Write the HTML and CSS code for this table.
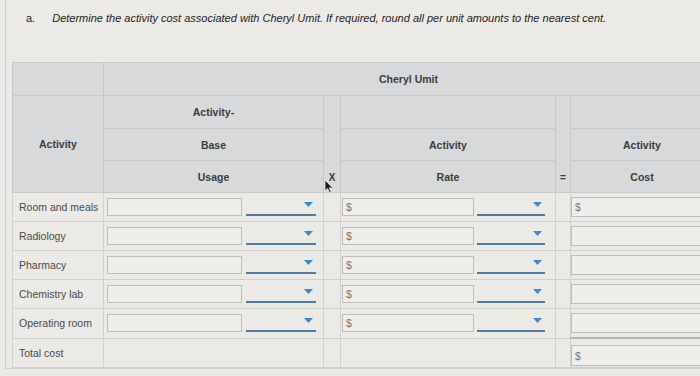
FILE: index.html
```html
<!DOCTYPE html>
<html lang="en">
<head>
  <meta charset="UTF-8">
  <meta name="viewport" content="width=device-width, initial-scale=1.0">
  <title>Activity cost</title>
  <link rel="stylesheet" href="styles.css">
</head>
<body>
  <div class="page">
    <p class="prompt"><span class="label">a.</span><em>Determine the activity cost associated with Cheryl Umit. If required, round all per unit amounts to the nearest cent.</em></p>

    <table class="grid">
      <colgroup>
        <col class="c-name">
        <col class="c-base">
        <col class="c-op">
        <col class="c-rate">
        <col class="c-eq">
        <col class="c-cost">
      </colgroup>
      <thead>
        <tr class="h1">
          <th></th>
          <th colspan="5">Cheryl Umit</th>
        </tr>
        <tr class="h2">
          <th rowspan="3">Activity</th>
          <th>Activity-</th>
          <th rowspan="3" class="op">X</th>
          <th></th>
          <th rowspan="3" class="op">=</th>
          <th></th>
        </tr>
        <tr class="h3">
          <th>Base</th>
          <th>Activity</th>
          <th>Activity</th>
        </tr>
        <tr class="h4">
          <th>Usage</th>
          <th>Rate</th>
          <th>Cost</th>
        </tr>
      </thead>
      <tbody id="rows"></tbody>
    </table>
  </div>

  <!-- mouse pointer left over the header -->
  <svg class="cursor" width="10" height="15" viewBox="0 0 10 15">
    <path d="M1 1 L1 12 L3.6 9.6 L5.6 14 L7.2 13.3 L5.3 9 L8.8 9 Z" fill="#1c1c1c" stroke="#f2f2f2" stroke-width="0.8"/>
  </svg>

  <script>
    const activities = ['Room and meals', 'Radiology', 'Pharmacy', 'Chemistry lab', 'Operating room'];

    const arrow = '<svg width="9" height="5" viewBox="0 0 9 5"><path d="M0 0 H9 L4.5 5 Z" fill="#3b88cc"/></svg>';
    const dropdown = `<div class="select">${arrow}</div>`;

    const body = document.getElementById('rows');

    activities.forEach((name, i) => {
      const tr = document.createElement('tr');
      tr.innerHTML = `
        <td class="name">${name}</td>
        <td><div class="pair"><div class="field base"></div>${dropdown}</div></td>
        <td></td>
        <td><div class="pair rate"><div class="field money"><span>$</span></div>${dropdown}</div></td>
        <td></td>
        <td class="cost"><div class="field">${i === 0 ? '<span>$</span>' : ''}</div></td>`;
      body.appendChild(tr);
    });

    const total = document.createElement('tr');
    total.className = 'total';
    total.innerHTML = `
      <td class="name">Total cost</td>
      <td></td><td></td><td></td><td></td>
      <td class="cost"><div class="field"><span>$</span></div></td>`;
    body.appendChild(total);
  </script>
</body>
</html>
```

FILE: styles.css
```css
body {
  margin: 0;
  background-color: #ebeae7;
  font-family: "Liberation Sans", Arial, sans-serif;
  color: #444;
  overflow: hidden;
}
.page {
  margin-left: 5px;
  height: 369px;
  box-sizing: border-box;
  padding: 11px 0 0 6px;
  border-left: 1px solid #d2d0cc;
  border-bottom: 1px solid #d2d0cc;
}
.prompt {
  margin: 0 0 0 14px;
  font-size: 11px;
  line-height: 14px;
  color: #222;
  white-space: nowrap;
}
.prompt .label {
  margin-right: 17px;
}
.grid {
  margin-top: 37px;
  width: 701px;
  table-layout: fixed;
  border-collapse: collapse;
  font-size: 10.5px;
}
.c-name { width: 91px; }
.c-base { width: 220px; }
.c-op { width: 17px; }
.c-rate { width: 215px; }
.c-eq { width: 15px; }
.c-cost { width: 143px; }

.grid th,
.grid td {
  border: 1px solid #c6c8c9;
  padding: 0;
}
.grid th {
  background-color: #d7d9da;
  color: #3c3c3c;
  font-weight: bold;
  text-align: center;
}
.h1 { height: 33px; }
.h2 { height: 33px; }
.h3 { height: 32px; }
.h4 { height: 32px; }
.grid th.op {
  vertical-align: bottom;
  padding-bottom: 9px;
  font-size: 10px;
}
.grid td {
  height: 28px;
  background-color: #ebeae6;
  border-color: #d0d0ce;
}
.grid td.name {
  padding-left: 6px;
  color: #4a4a4a;
  white-space: nowrap;
}
.pair {
  display: flex;
  align-items: center;
  gap: 4px;
  padding-left: 3px;
}
.pair.rate {
  padding-left: 1px;
  gap: 3px;
}
.field {
  height: 18px;
  box-sizing: border-box;
  border: 1px solid #bcbcbb;
  background-color: #efeeeb;
  display: flex;
  align-items: center;
  padding-left: 3px;
  font-size: 10.5px;
  color: #767676;
}
.field.base { width: 135px; }
.field.money { width: 132px; }
.select {
  width: 70px;
  height: 14px;
  margin-top: 4px;
  box-sizing: border-box;
  border-bottom: 2px solid #4f7aa3;
  display: flex;
  justify-content: flex-end;
  align-items: flex-start;
  padding-right: 3px;
}
.pair.rate .select { width: 68px; }
.grid td.cost {
  padding: 0 1px 0 0;
}
.cost .field {
  height: 20px;
}
.total td {
  height: 27px;
  border-top: 1px solid #c2c2c0;
}
.total td.cost {
  border-top: 2px solid #b4b4b2;
  vertical-align: bottom;
  padding-bottom: 1px;
}
.total .field {
  height: 21px;
}
.cursor {
  position: absolute;
  left: 324px;
  top: 179px;
}
```
